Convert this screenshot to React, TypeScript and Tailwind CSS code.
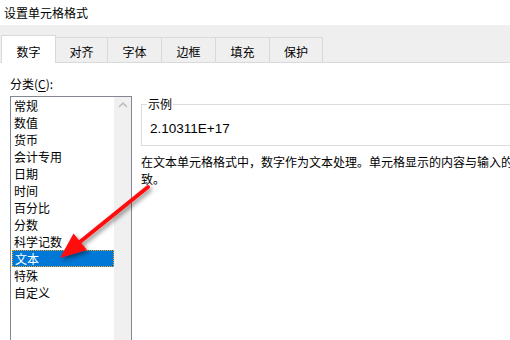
import React from "react";

const items = ["常规", "数值", "货币", "会计专用", "日期", "时间", "百分比", "分数", "科学记数", "文本", "特殊", "自定义"];
const tabs = [
  { label: "对齐", w: "w-[52px]" },
  { label: "字体", w: "w-[54px]" },
  { label: "边框", w: "w-[54px]" },
  { label: "填充", w: "w-[54px]" },
  { label: "保护", w: "w-[53px]" },
];

export default function App() {
  return (
    <div
      className="relative w-[510px] h-[340px] overflow-hidden bg-white text-[12px] text-black"
      style={{ fontFamily: '"Noto Sans CJK SC", "Noto Sans", sans-serif' }}
    >
      <div className="h-[25px] pl-[4px] flex items-center leading-none">设置单元格格式</div>

      <div className="h-[38px] bg-[#efefef] border-b border-[#d9d9d9] flex items-end pl-[1px]">
        <div className="relative z-10 -mb-px h-[28px] w-[55px] bg-white border border-b-0 border-[#d9d9d9] flex justify-center pt-[4px] leading-[24px]">
          数字
        </div>
        {tabs.map((t) => (
          <div
            key={t.label}
            className={`h-[25px] ${t.w} bg-[#efefef] border-t border-r border-[#d9d9d9] flex justify-center pt-[3px] leading-[22px]`}
          >
            {t.label}
          </div>
        ))}
      </div>

      <div className="flex">
        <div className="ml-[10px] w-[122px] flex flex-col">
          <div className="mt-[12px] h-[17px] leading-[17px] mb-[4px]">
            分类(<span className="underline underline-offset-2">C</span>):
          </div>
          <div className="h-[260px] border border-[#828790] flex">
            <div className="w-[103px] flex flex-col">
              {items.map((it) =>
                it === "文本" ? (
                  <div
                    key={it}
                    className="ml-px h-[17px] leading-[15px] pl-[2px] bg-[#0078d7] text-white border border-dotted border-[#f5a623]"
                  >
                    {it}
                  </div>
                ) : (
                  <div key={it} className="h-[17px] leading-[17px] pl-[3px]">
                    {it}
                  </div>
                )
              )}
            </div>
            <div className="w-[17px] bg-[#f0f0f0] flex justify-center pt-[5px]">
              <svg width="10" height="6" viewBox="0 0 10 6">
                <path d="M1 5 L5 1.2 L9 5" fill="none" stroke="#bdbdbd" strokeWidth="1.6" />
              </svg>
            </div>
          </div>
        </div>

        <div className="ml-[9px] flex flex-col">
          <fieldset className="mt-[34px] w-[400px] h-[49px] border border-[#dcdcdc] px-[8px]">
            <legend className="ml-[-3px] px-[1px] leading-[14px]">示例</legend>
            <div
              className="pt-[9px] leading-[17px] text-[13.5px]"
              style={{ fontFamily: '"Liberation Sans", sans-serif' }}
            >
              2.10311E+17
            </div>
          </fieldset>
          <div className="mt-[7px] leading-[17px] whitespace-nowrap">
            <div>在文本单元格格式中，数字作为文本处理。单元格显示的内容与输入的</div>
            <div>致。</div>
          </div>
        </div>
      </div>

      <svg className="absolute inset-0 pointer-events-none" width="510" height="340" viewBox="0 0 510 340">
        <defs>
          <filter id="sh" x="-20%" y="-20%" width="140%" height="140%">
            <feDropShadow dx="2" dy="2.5" stdDeviation="2" floodColor="#000" floodOpacity="0.45" />
          </filter>
        </defs>
        <g filter="url(#sh)">
          <line x1="148" y1="187" x2="78" y2="243.5" stroke="#ff1010" strokeWidth="4" strokeLinecap="round" />
          <polygon points="60,258 73.5,233.5 87,250" fill="#ff1010" />
        </g>
      </svg>
    </div>
  );
}
